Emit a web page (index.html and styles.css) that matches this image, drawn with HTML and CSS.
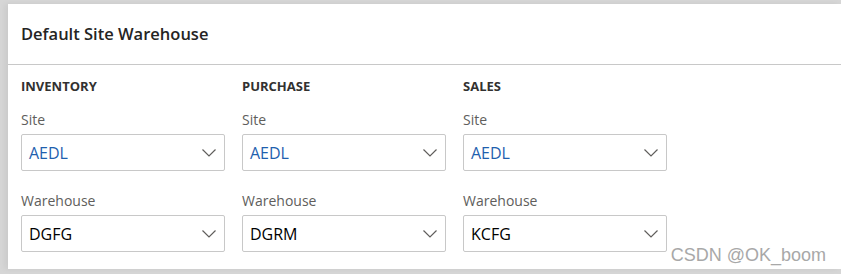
FILE: index.html
```html
<!DOCTYPE html>
<html lang="en">
<head>
    <meta charset="UTF-8">
    <meta name="viewport" content="width=device-width, initial-scale=1.0">
    <title>Default Site Warehouse</title>
    <link rel="stylesheet" href="styles.css">
</head>
<body>
    <div class="card">
        <!-- Header -->
        <div class="card-header">Default Site Warehouse</div>

        <!-- Groups -->
        <div class="card-body">
            <div class="group">
                <h4>INVENTORY</h4>
                <label>Site</label>
                <div class="select"><span class="value link">AEDL</span><svg class="chev" width="14" height="8" viewBox="0 0 14 8"><polyline points="0.5,0.5 7,7 13.5,0.5" /></svg></div>
                <label>Warehouse</label>
                <div class="select"><span class="value">DGFG</span><svg class="chev" width="14" height="8" viewBox="0 0 14 8"><polyline points="0.5,0.5 7,7 13.5,0.5" /></svg></div>
            </div>
            <div class="group">
                <h4>PURCHASE</h4>
                <label>Site</label>
                <div class="select"><span class="value link">AEDL</span><svg class="chev" width="14" height="8" viewBox="0 0 14 8"><polyline points="0.5,0.5 7,7 13.5,0.5" /></svg></div>
                <label>Warehouse</label>
                <div class="select"><span class="value">DGRM</span><svg class="chev" width="14" height="8" viewBox="0 0 14 8"><polyline points="0.5,0.5 7,7 13.5,0.5" /></svg></div>
            </div>
            <div class="group">
                <h4>SALES</h4>
                <label>Site</label>
                <div class="select"><span class="value link">AEDL</span><svg class="chev" width="14" height="8" viewBox="0 0 14 8"><polyline points="0.5,0.5 7,7 13.5,0.5" /></svg></div>
                <label>Warehouse</label>
                <div class="select"><span class="value">KCFG</span><svg class="chev" width="14" height="8" viewBox="0 0 14 8"><polyline points="0.5,0.5 7,7 13.5,0.5" /></svg></div>
            </div>
        </div>

        <span class="watermark">CSDN @OK_boom</span>
    </div>
</body>
</html>
```

FILE: styles.css
```css
/* General Styles */
body {
    font-family: "Segoe UI", "Open Sans", sans-serif;
    background-color: #d6d6d6;
    color: #323130;
    margin: 0;
    padding: 4px 0 5px 8px;
}

.card {
    position: relative;
    background: #fff;
    height: 265px;
    box-shadow: -3px 0 6px rgba(0, 0, 0, 0.06);
}

.card-header {
    display: flex;
    align-items: center;
    height: 60px;
    padding-left: 13px;
    border-bottom: 1px solid #c8c8c8;
    font-size: 16.5px;
    line-height: 24px;
    font-weight: 600;
    color: #252423;
}

.card-body {
    display: grid;
    grid-template-columns: repeat(3, 204px);
    column-gap: 17px;
    padding: 12px 13px 0;
}

.group h4 {
    margin: 0;
    font-size: 13px;
    line-height: 18px;
    font-weight: 700;
    color: #323130;
}

.group label {
    display: block;
    margin-top: 15px;
    font-size: 14px;
    line-height: 20px;
    color: #605e5c;
}

.group .select + label {
    margin-top: 20px;
}

.select {
    display: flex;
    align-items: center;
    justify-content: space-between;
    height: 37px;
    margin-top: 4px;
    padding: 0 8px 0 7px;
    border: 1px solid #c8c8c8;
    border-radius: 2px;
    box-sizing: border-box;
}

.value {
    font-size: 16px;
    line-height: 22px;
    color: #000;
}

.value.link {
    color: #1f5fae;
}

.chev polyline {
    fill: none;
    stroke: #605e5c;
    stroke-width: 1.2;
}

.watermark {
    position: absolute;
    right: 15px;
    bottom: 4px;
    font-family: "Liberation Sans", Arial, sans-serif;
    font-size: 18px;
    line-height: 20px;
    color: #a8a8a8;
}
```
